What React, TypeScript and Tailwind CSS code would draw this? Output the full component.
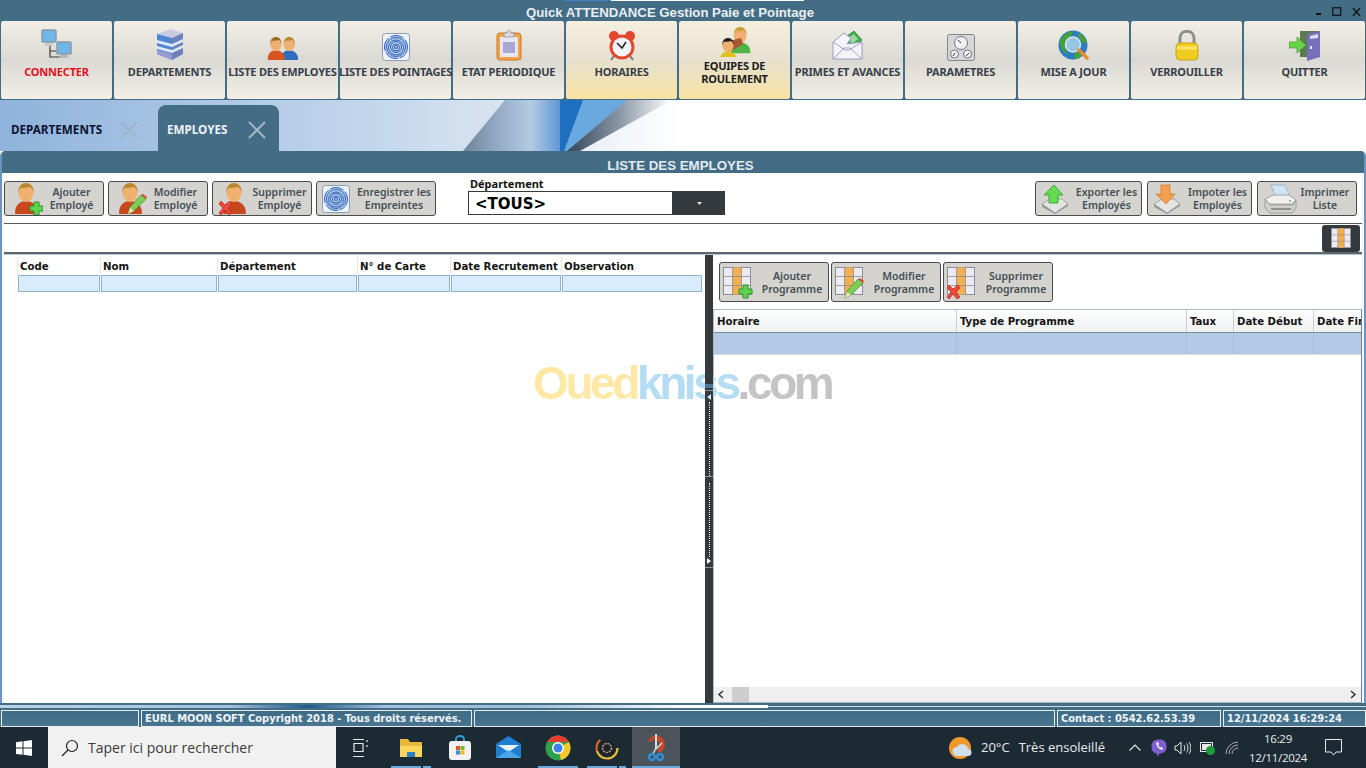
import React from "react"

const UI = "font-['Noto_Sans',sans-serif]"

// ---------- ICONS ----------
const Person = ({ x = 0, y = 0, shirt = "#d4521f", hair = "#b8862d" }: { x?: number; y?: number; shirt?: string; hair?: string }) => (
	<g transform={`translate(${x} ${y})`}>
		<path d="M1 30c0-8 5-12 11-12s12 4 12 12c0 1-1 1-2 1H3c-1 0-2 0-2-1z" fill={shirt} />
		<ellipse cx="12" cy="10" rx="7.5" ry="9" fill="#f0b070" />
		<path d="M4.500 10C4 3 8 0 12 0s8 3 7.500 10c-1-4-2-6-4-6-3 1-8 1-9 1-1 1-1.500 3-2 5z" fill={hair} />
	</g>
)

const Plus = ({ x, y }: { x: number; y: number }) => (
	<path transform={`translate(${x} ${y})`} d="M4 0h5v4h4v5H9v4H4V9H0V4h4z" fill="#5fd34d" stroke="#2f8f2a" />
)
const Cross = ({ x, y }: { x: number; y: number }) => (
	<path transform={`translate(${x} ${y})`} d="M2 0l4 4 5-4 2 3-4 4 4 5-3 2-4-5-4 5-2-2 4-5-4-4z" fill="#ea4a3a" stroke="#b3261e" strokeWidth=".7" />
)
const Pen = ({ x, y }: { x: number; y: number }) => (
	<g transform={`translate(${x} ${y})`}>
		<path d="M0 20l2-7L13 1l5 4L6 17z" fill="#7ccf52" stroke="#3f8a2e" strokeWidth=".7" />
		<path d="M13 1l2-1 4 3-1 2z" fill="#d8483a" />
		<path d="M0 20l2-6 4 3z" fill="#f3e0b8" />
	</g>
)

const Fingerprint = ({ size = 28 }: { size?: number }) => (
	<svg width={size} height={size} viewBox="0 0 28 28">
		<rect x=".5" y=".5" width="27" height="27" rx="3" fill="#eef2fa" stroke="#8b9cb8" />
		<circle cx="14" cy="14" r="11.500" fill="#b4cbee" />
		<g fill="none" stroke="#2f64b5" strokeWidth="1">
			<circle cx="14" cy="14" r="1.500" />
			<circle cx="14" cy="14.500" r="3.500" />
			<circle cx="14" cy="14" r="5.500" />
			<circle cx="14" cy="14.500" r="7.500" />
			<circle cx="14" cy="14" r="9.500" />
			<circle cx="14" cy="14" r="11.500" strokeDasharray="14 2" />
		</g>
	</svg>
)

const Network = () => (
	<svg width="32" height="32" viewBox="0 0 32 32">
		<path d="M9 17v11h12M9 22h6" fill="none" stroke="#3a3a3a" strokeWidth="1.200" />
		<rect x="1" y="1" width="14" height="12" rx="1" fill="#6fb6e8" stroke="#8d98a4" strokeWidth="1.500" />
		<path d="M5 14h6l2 3H3z" fill="#c3c9cf" />
		<rect x="16" y="13" width="14" height="12" rx="1" fill="#6fb6e8" stroke="#8d98a4" strokeWidth="1.500" />
		<path d="M20 26h6l2 3H18z" fill="#b4bac0" />
	</svg>
)
const Database = () => (
	<svg width="28" height="32" viewBox="0 0 28 32">
		<path d="M1 5L15 0l12 4-11 5z" fill="#c9cbe2" />
		<path d="M1 5l15 4v22L1 25z" fill="#4f86d2" />
		<path d="M16 9l11-5v21l-11 6z" fill="#6f7fb8" />
		<path d="M1 11l15 4 11-5v3l-11 5-15-4zM1 17l15 4 11-5v3l-11 5-15-4z" fill="#dbe8f8" />
		<path d="M1 21l15 4v6L1 25z" fill="#9a9ccf" />
	</svg>
)
const Users = () => (
	<svg width="32" height="24" viewBox="0 0 32 24">
		<g transform="scale(.74)">
			<Person x={18} y={0} shirt="#2d6cc0" hair="#b8862d" />
			<Person x={0} y={0} shirt="#d9551f" hair="#9a6a2c" />
		</g>
	</svg>
)
const Clipboard = () => (
	<svg width="26" height="32" viewBox="0 0 26 32">
		<rect x="1" y="4" width="24" height="27" rx="3" fill="#f2a24a" stroke="#c97a25" />
		<rect x="4" y="8" width="18" height="20" fill="#e8e6f2" />
		<rect x="7" y="13" width="12" height="11" fill="#aaa6d2" />
		<path d="M8 8V4h3c0-4 4-4 4 0h3v4z" fill="#d8d8de" stroke="#8d8d96" strokeWidth=".7" />
	</svg>
)
const Clock = () => (
	<svg width="28" height="30" viewBox="0 0 28 30">
		<circle cx="6" cy="5" r="5" fill="#e5462f" />
		<circle cx="22" cy="5" r="5" fill="#e5462f" />
		<path d="M6 25l-3 4M22 25l3 4" stroke="#777" strokeWidth="2" />
		<circle cx="14" cy="16" r="12.500" fill="#e5462f" />
		<circle cx="14" cy="16" r="9.500" fill="#f3f3f8" />
		<path d="M9 12l5 5 4-6" fill="none" stroke="#222" strokeWidth="1.500" />
	</svg>
)
const Team = () => (
	<svg width="32" height="30" viewBox="0 0 32 30">
		<g transform="translate(11 0) scale(.85)">
			<Person shirt="#4fb548" hair="#cfa03c" />
		</g>
		<path d="M10 14l12-3 2 6-10 6z" fill="#a9552f" />
		<g transform="translate(0 11) scale(.75)">
			<Person shirt="#e3c020" hair="#222" />
		</g>
	</svg>
)
const Envelope = () => (
	<svg width="31" height="31" viewBox="0 0 31 31">
		<path d="M11 9L22 1l8 9-9 8z" fill="#3fae4c" stroke="#21782e" strokeWidth=".7" />
		<path d="M16 8l6-4 4 5-6 5z" fill="#9ad89f" />
		<path d="M1 12L12 3l7 5-4 6 15-2v17H1z" fill="#f4f5fb" stroke="#9a9ac4" />
		<path d="M1 29l11-11h6l12 11M1 12l12 8 4 0 13-8" fill="none" stroke="#a0a0cc" />
	</svg>
)
const Gauges = () => (
	<svg width="28" height="27" viewBox="0 0 28 27">
		<rect x=".5" y=".5" width="27" height="26" rx="2" fill="#d6d6d8" stroke="#85858a" />
		<g fill="#eef0f4" stroke="#72767e">
			<circle cx="14" cy="9" r="6.500" />
			<circle cx="7.500" cy="20" r="4" />
			<circle cx="20.500" cy="20" r="4" />
		</g>
		<path d="M11 6l3 3M6 22l2-3M19 22l3-3" stroke="#333" />
	</svg>
)
const Globe = () => (
	<svg width="31" height="31" viewBox="0 0 31 31">
		<circle cx="15" cy="15" r="14.500" fill="#2a7cc4" />
		<path d="M2 10c4-6 8-8 12-9 2 3-2 5-3 8-1 4-4 3-4 7 0 3 2 5 3 8-5-1-9-7-8-14zM20 3c4 1 8 5 9 10-3 1-6-1-7-4-1-2-3-3-2-6zM18 22c3-1 6 0 7 2-2 3-5 5-8 5-1-3-1-5 1-7z" fill="#46a03c" />
		<circle cx="15" cy="14.500" r="7.500" fill="#bcdff0" fillOpacity=".75" stroke="#d8e6ee" strokeWidth="1.500" />
		<path d="M21 20l8 8" stroke="#e88a3c" strokeWidth="3.500" strokeLinecap="round" />
	</svg>
)
const Lock = () => (
	<svg width="24" height="31" viewBox="0 0 24 31">
		<path d="M5 14V8c0-9 14-9 14 0v6" fill="none" stroke="#8d8d8d" strokeWidth="3" />
		<rect x="1" y="13" width="22" height="17" rx="4" fill="#f0cc20" stroke="#c9a416" />
		<path d="M2 18h20" stroke="#fbe86a" strokeWidth="3" />
	</svg>
)
const Door = () => (
	<svg width="32" height="31" viewBox="0 0 32 31">
		<rect x="11" y="1" width="20" height="26" fill="#5e7b50" />
		<path d="M18 4l13-3v26l-13 4z" fill="#7471ba" />
		<path d="M21 6l8-2v4l-8 1z" fill="#d9dcf4" />
		<rect x="21" y="16" width="2" height="3" fill="#e5e5f5" />
		<path d="M0 12h8V7l9 8-9 8v-5H0z" fill="#67d44a" stroke="#3f9b2e" strokeWidth=".7" />
	</svg>
)
const Grid = ({ size = 28 }: { size?: number }) => (
	<svg width={size} height={size} viewBox="0 0 28 28">
		<rect x=".5" y=".5" width="27" height="27" fill="#eceaf4" stroke="#8c8c94" />
		<rect x="9.500" y=".5" width="9" height="27" fill="#f4b04e" />
		<path d="M9.500 0v28M18.500 0v28M0 9.500h28M0 18.500h28" stroke="#8c8c94" strokeWidth=".8" />
	</svg>
)
const Tray = ({ arrow, dark, light }: { arrow: string; dark: string; light: string }) => (
	<svg width="28" height="32" viewBox="0 0 28 32">
		<path d="M1 21l8-5h12l6 5-13 9z" fill="#e4e4e2" stroke="#8a8a8a" strokeWidth=".7" />
		<path d="M1 21v3l13 7 13-8v-2l-13 9z" fill="#9a9a98" />
		<path d={arrow} fill={light} stroke={dark} strokeWidth=".8" />
	</svg>
)
const Printer = () => (
	<svg width="34" height="32" viewBox="0 0 34 32">
		<path d="M8 2h14l5 12H13z" fill="#cfe4f6" stroke="#9aa8b4" strokeWidth=".7" />
		<path d="M2 16l8-4h16l7 5-4 4H6z" fill="#f0f0ee" stroke="#8a8a8a" strokeWidth=".7" />
		<path d="M2 16l5 6h23l3-5v8l-4 5H7l-5-5z" fill="#cfcfcd" stroke="#8a8a8a" strokeWidth=".7" />
		<path d="M8 26h20" stroke="#555" />
		<circle cx="27" cy="18" r="1" fill="#52c04a" />
	</svg>
)

const PersonIcon = ({ children }: { children?: React.ReactNode }) => (
	<svg width="33" height="33" viewBox="0 0 33 33">
		<Person x={4} y={1} shirt="#c9471c" />
		{children}
	</svg>
)
const GridIcon = ({ children }: { children?: React.ReactNode }) => (
	<svg width="30" height="33" viewBox="0 0 30 33">
		<g transform="translate(0 1)">
			<rect x=".5" y=".5" width="27" height="27" fill="#eceaf4" stroke="#8c8c94" />
			<rect x="9.500" y=".5" width="9" height="27" fill="#f4b04e" />
			<path d="M9.500 0v28M18.500 0v28M0 9.500h28M0 18.500h28" stroke="#8c8c94" strokeWidth=".8" />
		</g>
		{children}
	</svg>
)

// ---------- TOP BAR ----------
const topButtons = [
	{ label: "CONNECTER", icon: <Network />, red: true },
	{ label: "DEPARTEMENTS", icon: <Database /> },
	{ label: "LISTE DES EMPLOYES", icon: <Users /> },
	{ label: "LISTE DES POINTAGES", icon: <Fingerprint /> },
	{ label: "ETAT PERIODIQUE", icon: <Clipboard /> },
	{ label: "HORAIRES", icon: <Clock />, hot: true },
	{ label: "EQUIPES DE ROULEMENT", icon: <Team />, hot: true, two: true },
	{ label: "PRIMES ET AVANCES", icon: <Envelope /> },
	{ label: "PARAMETRES", icon: <Gauges /> },
	{ label: "MISE A JOUR", icon: <Globe /> },
	{ label: "VERROUILLER", icon: <Lock /> },
	{ label: "QUITTER", icon: <Door /> },
]

const TopButton = ({ label, icon, red, hot, two }: { label: string; icon: React.ReactNode; red?: boolean; hot?: boolean; two?: boolean }) => (
	<button
		className={`flex h-[79px] min-w-0 flex-1 flex-col items-center whitespace-nowrap rounded-[3px] border border-t-0 border-[#436c85] px-0 ${
			hot
				? "bg-[linear-gradient(#f5efdf,#e6e1d0_50%,#f9e2a2)]"
				: "bg-[linear-gradient(#f3efe6,#dbd9d3_50%,#f3efe6)]"
		} ${two ? "pt-[2px]" : "pt-[10px]"}`}
	>
		<div className={`flex items-end justify-center ${two ? "h-[34px]" : "h-[30px]"}`}>{icon}</div>
		<div
			className={`text-center text-[11px] font-bold tracking-[-0.2px] ${two ? "mt-[2px] w-[80px] whitespace-normal leading-[13px] text-[#1c1c1c]" : "mt-[4px] leading-[14px]"} ${
				red ? "text-[#e2101c]" : two ? "" : "text-[#37404a]"
			}`}
		>
			{label}
		</div>
	</button>
)

// ---------- ACTION BUTTONS ----------
const ActionButton = ({ width, icon, lines, tall, shift }: { width: string; icon: React.ReactNode; lines: string[]; tall?: boolean; shift?: boolean }) => (
	<button
		className={`flex shrink-0 items-center rounded-[3px] border border-[#4a4a4a] bg-[#d4d3cf] pr-[3px] ${tall ? "h-[40px] pl-[3px]" : "h-[35px] pl-[5px]"} ${width}`}
	>
		<span className="flex shrink-0 items-center justify-center">{icon}</span>
		<span className={`flex-1 text-center text-[10.500px] font-semibold leading-[13px] text-[#454e55] ${tall ? "mt-[2px]" : ""} ${shift ? "pl-[6px]" : ""}`}>
			{lines.map((l) => (
				<span key={l} className="block whitespace-nowrap">
					{l}
				</span>
			))}
		</span>
	</button>
)

const Cell = ({ className }: { className: string }) => (
	<div className={`h-[17px] shrink-0 border border-[#8fb4cf] bg-[#d9ecfd] ${className}`} />
)

const leftCols = [
	{ t: "Code", w: "w-[83px]" },
	{ t: "Nom", w: "w-[117px]" },
	{ t: "Département", w: "w-[140px]" },
	{ t: "N° de Carte", w: "w-[93px]" },
	{ t: "Date Recrutement", w: "w-[111px]" },
	{ t: "Observation", w: "w-[141px]" },
]

const rightCols = [
	{ t: "Horaire", w: "w-[243px]" },
	{ t: "Type de Programme", w: "w-[230px]" },
	{ t: "Taux", w: "w-[47px]" },
	{ t: "Date Début", w: "w-[80px]" },
	{ t: "Date Fin", w: "w-[60px]" },
]

const StatusCell = ({ className, children }: { className: string; children?: React.ReactNode }) => (
	<div className={`mt-px flex h-[17px] items-center whitespace-nowrap border border-[#e6eef3] bg-[linear-gradient(#3f6a84,#4a7590)] pl-[3px] pt-px font-['DejaVu_Sans_Condensed','DejaVu_Sans',sans-serif] text-[11px] font-bold text-[#eef4f8] ${className}`}>
		{children}
	</div>
)

export default function App() {
	return (
		<div className={`flex h-[768px] w-[1366px] flex-col overflow-hidden bg-white ${UI}`}>
			{/* title bar */}
			<div className="relative flex h-[21px] shrink-0 items-end justify-center bg-[#436c85] pr-[26px]">
				<span className="font-['Liberation_Sans',sans-serif] text-[13.2px] font-bold leading-[17px] text-[#e9eff3]">
					Quick ATTENDANCE Gestion Paie et Pointage
				</span>
				<div className="absolute left-[563px] top-0 h-px w-[48px] bg-[#3d7fc4]" />
				<div className="absolute left-[611px] top-0 h-px w-[193px] bg-white" />
				<div className="absolute right-[5px] top-[7px] flex items-center gap-[10px] text-[#111]">
					<svg width="7" height="8" viewBox="0 0 7 8"><rect x="1" y="5" width="5" height="2" fill="#111" /></svg>
					<svg width="10" height="9" viewBox="0 0 10 9"><rect x=".75" y=".75" width="8" height="7.500" fill="none" stroke="#111" strokeWidth="1.200" /></svg>
					<svg width="9" height="8" viewBox="0 0 9 8"><path d="M1 0l7 8M8 0L1 8" stroke="#111" strokeWidth="1.300" /></svg>
				</div>
			</div>

			{/* main toolbar */}
			<div className="flex h-[79px] shrink-0 bg-[#436c85]">
				{topButtons.map((b, i) => (
					<div key={b.label} className={i === 11 ? "flex w-[123px]" : "flex w-[113px]"}>
						<TopButton {...b} />
					</div>
				))}
			</div>

			{/* tabs */}
			<div className="relative flex h-[51px] shrink-0 items-end bg-[linear-gradient(90deg,#8fb3dc,#c9daee_30%,#dde6f1_38%,#ffffff_50%)]">
				<svg className="absolute left-[440px] top-0" width="250" height="51" viewBox="0 0 250 51">
					<defs>
						<linearGradient id="grey" x1="0" x2="1" y1="0" y2="0">
							<stop offset="0" stopColor="#6f8196" />
							<stop offset=".3" stopColor="#8ea5bf" />
							<stop offset=".7" stopColor="#b4cbe4" />
							<stop offset="1" stopColor="#5f97d6" />
						</linearGradient>
						<linearGradient id="shade" x1="0" x2="1" y1="0" y2="0">
							<stop offset="0" stopColor="#33465c" />
							<stop offset=".5" stopColor="#8a97a6" />
							<stop offset="1" stopColor="#ffffff" />
						</linearGradient>
					</defs>
					<path d="M23 51L65 0h55v51z" fill="url(#grey)" />
					<path d="M120 0h67l-60 51h-7z" fill="#1e6fc0" />
					<path d="M143 0h44l-60 51h-3z" fill="#6aa8e0" />
					<path d="M187 0h45l-92 51h-13z" fill="url(#shade)" />
				</svg>
				<div className="relative flex h-[46px] w-[158px] items-center pl-[11px] pt-[4px]">
					<span className="text-[11.700px] font-bold text-[#0c1330]">DEPARTEMENTS</span>
					<svg className="ml-[18px]" width="18" height="18" viewBox="0 0 18 18"><path d="M1 1l16 16M17 1L1 17" stroke="#9fb4cc" strokeWidth="2" /></svg>
				</div>
				<div className="relative flex h-[46px] w-[121px] items-center rounded-t-[8px] bg-[#436c85] pl-[9px] pt-[4px]">
					<span className="text-[11.700px] font-bold text-[#eef3f6]">EMPLOYES</span>
					<svg className="ml-[20px]" width="18" height="18" viewBox="0 0 18 18"><path d="M1 1l16 16M17 1L1 17" stroke="#a4b6c2" strokeWidth="2" /></svg>
				</div>
			</div>

			{/* panel */}
			<div className="flex min-h-0 flex-1 flex-col rounded-t-[5px] border-x-[2px] border-x-[#6a93bd] bg-[#436c85]">
				<div className="h-[22px] shrink-0 pr-[5px] text-center font-['Liberation_Sans',sans-serif] text-[13.300px] font-bold leading-[30px] text-[#e3ebf0]">
					LISTE DES EMPLOYES
				</div>
				<div className="flex min-h-0 flex-1 flex-col border-x-[2px] border-x-[#f4f6f8] bg-white">
					{/* actions row */}
					<div className="flex h-[51px] shrink-0 items-start border-b border-[#555c60] pt-[8px]">
						<div className="flex gap-[4px]">
							<ActionButton width="w-[100px]" lines={["Ajouter", "Employé"]} icon={<PersonIcon><Plus x={20} y={20} /></PersonIcon>} />
							<ActionButton width="w-[100px]" lines={["Modifier", "Employé"]} icon={<PersonIcon><Pen x={14} y={12} /></PersonIcon>} />
							<ActionButton width="w-[100px]" lines={["Supprimer", "Employé"]} icon={<PersonIcon><Cross x={1} y={19} /></PersonIcon>} />
							<ActionButton shift width="w-[120px]" lines={["Enregistrer les", "Empreintes"]} icon={<Fingerprint />} />
						</div>
						<div className="ml-[32px] mt-[-4px] w-[257px]">
							<div className="pl-[2px] text-[11px] font-bold leading-[14px] text-[#111]">Département</div>
							<div className="flex h-[24px]">
								<div className="flex-1 border border-[#333a3f] pl-[6px] font-['DejaVu_Sans',sans-serif] text-[15px] font-bold leading-[24px] text-black">&lt;TOUS&gt;</div>
								<div className="flex w-[52px] items-center justify-center bg-[#33393d]">
									<svg width="5" height="3" viewBox="0 0 5 3"><path d="M0 0h5L2.500 3z" fill="#e4e4e4" /></svg>
								</div>
							</div>
						</div>
						<div className="ml-auto flex gap-[5px] pr-[5px]">
							<ActionButton shift width="w-[107px]" lines={["Exporter les", "Employés"]} icon={<Tray arrow="M8 12h-5L13 2l9 10h-5v8H8z" dark="#2f9b2c" light="#63dc52" />} />
							<ActionButton shift width="w-[105px]" lines={["Impoter les", "Employés"]} icon={<Tray arrow="M8 2h9v9h5l-9 10L3 11h5z" dark="#d07a28" light="#f5a050" />} />
							<ActionButton width="w-[100px]" lines={["Imprimer", "Liste"]} icon={<Printer />} />
						</div>
					</div>

					{/* second strip */}
					<div className="flex h-[30px] shrink-0 items-center justify-end border-b-[2px] border-[#5d686e]">
						<div className="mr-[2px] flex h-[27px] w-[38px] items-center justify-center rounded-[3px] bg-[#33393d]">
							<Grid size={20} />
						</div>
					</div>

					{/* split */}
					<div className="flex min-h-0 flex-1 border-t border-[#b9c6cf]">
						{/* left */}
						<div className="w-[701px] shrink-0 pl-[13px] pt-[2px]">
							<div className="flex">
								{leftCols.map((c) => (
									<div key={c.t} className={`h-[18px] shrink-0 whitespace-nowrap border-l border-[#e1e6ea] pl-[2px] font-['DejaVu_Sans_Condensed','DejaVu_Sans',sans-serif] text-[11.300px] font-bold leading-[20px] text-[#141414] ${c.w}`}>
										{c.t}
									</div>
								))}
							</div>
							<div className="ml-px flex gap-px">
								<Cell className="w-[82px]" />
								<Cell className="w-[116px]" />
								<Cell className="w-[139px]" />
								<Cell className="w-[92px]" />
								<Cell className="w-[110px]" />
								<Cell className="w-[140px]" />
							</div>
						</div>

						{/* splitter */}
						<div className="z-10 flex w-[8px] shrink-0 flex-col items-center bg-[#33393d]">
							<div className="mt-[129px] h-[4px] w-full bg-[#4d7a96]" />
							<div className="mt-[2px] flex h-[178px] w-full flex-col items-center border-y border-[#8d9499] py-[3px]">
								<svg className="shrink-0" width="4" height="6" viewBox="0 0 4 6"><path d="M4 0v6L0 3z" fill="#cfe6f5" /></svg>
								<div className="mt-[2px] h-[76px] w-px border-l border-dotted border-white" />
								<div className="h-px w-full bg-[#8d9499]" />
								<div className="mt-[6px] h-[76px] w-px border-l border-dotted border-white" />
								<svg className="mt-[1px] shrink-0" width="4" height="6" viewBox="0 0 4 6"><path d="M0 0v6l4-3z" fill="#fff" /></svg>
							</div>
						</div>

						{/* right */}
						<div className="flex min-w-0 flex-1 flex-col">
							<div className="flex h-[54px] shrink-0 gap-[2px] pl-[6px] pt-[7px]">
								<ActionButton tall shift width="w-[110px]" lines={["Ajouter", "Programme"]} icon={<GridIcon><Plus x={16} y={19} /></GridIcon>} />
								<ActionButton tall shift width="w-[110px]" lines={["Modifier", "Programme"]} icon={<GridIcon><Pen x={10} y={12} /></GridIcon>} />
								<ActionButton tall shift width="w-[110px]" lines={["Supprimer", "Programme"]} icon={<GridIcon><Cross x={0} y={19} /></GridIcon>} />
							</div>
							<div className="flex min-h-0 flex-1 flex-col overflow-hidden border border-[#a9bac7] border-r-[#6e8496]">
								<div className="flex h-[23px] shrink-0 overflow-hidden border-b border-[#7f8f9a] bg-[linear-gradient(#ffffff,#eef0f2)]">
									{rightCols.map((c) => (
										<div key={c.t} className={`shrink-0 whitespace-nowrap border-r border-[#c8ced3] pl-[3px] font-['DejaVu_Sans_Condensed','DejaVu_Sans',sans-serif] text-[11.300px] font-bold leading-[23px] text-[#141414] ${c.w}`}>
											{c.t}
										</div>
									))}
								</div>
								<div className="flex h-[22px] shrink-0 border-b border-[#d6dde3] bg-[#b3c9e6]">
									{rightCols.map((c) => (
										<div key={c.t} className={`shrink-0 border-r border-[#a8bdd8] ${c.w}`} />
									))}
								</div>
								<div className="flex-1" />
								<div className="flex h-[15px] shrink-0 items-center bg-[#efefef] pl-[3px] pr-[4px]">
									<svg width="7" height="9" viewBox="0 0 7 9"><path d="M6 1L2 4.500 6 8" fill="none" stroke="#333" strokeWidth="1.500" /></svg>
									<div className="ml-[8px] h-full w-[17px] bg-[#cdcdcd]" />
									<svg className="ml-auto" width="7" height="9" viewBox="0 0 7 9"><path d="M1 1l4 3.500L1 8" fill="none" stroke="#333" strokeWidth="1.500" /></svg>
								</div>
							</div>
						</div>
					</div>
				</div>
			</div>

			{/* strip below panel */}
			<div className="flex h-[6px] shrink-0 items-center bg-[#436c85]">
				<div className="h-[3px] w-[768px] bg-[linear-gradient(90deg,#bcd2e8,#a3c0de_30%,#1f5b8c_40%,#a3c0de_50%,#9fbcd8_68%,#ffffff_90%)]" />
				<div className="h-[1px] flex-1 bg-[#cfdde6]" />
			</div>

			{/* status bar */}
			<div className="flex h-[18px] shrink-0 items-start gap-[2px] bg-[#436c85]">
				<StatusCell className="ml-px w-[138px]" />
				<StatusCell className="w-[331px]">EURL MOON SOFT Copyright 2018 - Tous droits réservés.</StatusCell>
				<StatusCell className="w-[581px]" />
				<StatusCell className="w-[164px]">Contact : 0542.62.53.39</StatusCell>
				<StatusCell className="flex-1">12/11/2024 16:29:24</StatusCell>
			</div>

			{/* windows taskbar */}
			<div className="flex h-[41px] shrink-0 items-center bg-[#1c2a33] text-[#e8ecef]">
				<div className="flex w-[48px] shrink-0 justify-center">
					<svg width="16" height="16" viewBox="0 0 16 16"><path d="M0 2.200l6.500-.9v6.300H0zM7.500 1.200L16 0v7.600H7.500zM0 8.500h6.500v6.300L0 13.900zM7.500 8.500H16V16l-8.500-1.200z" fill="#fff" /></svg>
				</div>
				<div className="flex h-[41px] w-[288px] shrink-0 items-center bg-[#f1f1f1] pl-[13px] font-['Open_Sans',sans-serif] text-[14px] text-[#3a3a3a]">
					<svg width="18" height="18" viewBox="0 0 18 18"><circle cx="11" cy="7" r="5.500" fill="none" stroke="#222" strokeWidth="1.200" /><path d="M7 11l-6 6" stroke="#222" strokeWidth="1.200" /></svg>
					<span className="ml-[9px]">Taper ici pour rechercher</span>
				</div>
				<div className="ml-[15px] flex w-[20px] shrink-0 justify-center">
					<svg width="16" height="18" viewBox="0 0 16 18"><path d="M0 .500h11M0 17.500h11M1 4.500h9v8H1zM14 1v2M14 6v2" fill="none" stroke="#e8e8e8" strokeWidth="1.200" /></svg>
				</div>
				<div className="relative ml-[15px] flex h-[41px] w-[49px] shrink-0 items-center justify-center">
					<svg width="24" height="22" viewBox="0 0 24 22"><path d="M1 2h8l2 3h12v15H1z" fill="#e8b93a" /><path d="M1 9h22v11H1z" fill="#f9d65c" /><path d="M8 20v-5h8v5z" fill="#2f7fc4" /></svg>
					<div className="absolute bottom-0 left-[5px] h-[2px] w-[30px] bg-[#6aa9dc]" />
					<div className="absolute bottom-0 left-[37px] h-[2px] w-[8px] bg-[#6aa9dc]" />
				</div>
				<div className="flex h-[41px] w-[49px] shrink-0 items-center justify-center">
					<svg width="24" height="26" viewBox="0 0 24 26"><path d="M8 7V4c0-4 8-4 8 0v3" fill="none" stroke="#2f9fd8" strokeWidth="1.800" /><rect x="1" y="6" width="22" height="19" rx="3" fill="#f2f2f2" /><rect x="8" y="11" width="4" height="4" fill="#e8502f" /><rect x="12.500" y="11" width="4" height="4" fill="#7ab82e" /><rect x="8" y="15.500" width="4" height="4" fill="#2f8fd8" /><rect x="12.500" y="15.500" width="4" height="4" fill="#f2b81e" /></svg>
				</div>
				<div className="flex h-[41px] w-[49px] shrink-0 items-center justify-center">
					<svg width="25" height="24" viewBox="0 0 25 24"><path d="M12.500 0L25 8v14H0V8z" fill="#1f7ed0" /><path d="M2 9h21l-10.500 7z" fill="#e8f2fa" /><path d="M0 22l12.500-8L25 22z" fill="#4aa5e8" /></svg>
				</div>
				<div className="relative flex h-[41px] w-[49px] shrink-0 items-center justify-center">
					<svg width="26" height="26" viewBox="0 0 26 26">
						<circle cx="13" cy="13" r="12.500" fill="#2ea24a" />
						<path d="M13 .500A12.500 12.500 0 0 1 24 7H13z" fill="#e53c2e" />
						<path d="M2 7a12.500 12.500 0 0 1 11-6.500V7z" fill="#e53c2e" />
						<path d="M24 7a12.500 12.500 0 0 1-8 18l-3-12z" fill="#f6c82c" />
						<circle cx="13" cy="13" r="6" fill="#fff" />
						<circle cx="13" cy="13" r="4.500" fill="#3d82e4" />
					</svg>
					<div className="absolute bottom-0 left-[5px] h-[2px] w-[40px] bg-[#6aa9dc]" />
				</div>
				<div className="relative flex h-[41px] w-[49px] shrink-0 items-center justify-center">
					<svg width="24" height="26" viewBox="0 0 24 26">
						<circle cx="12" cy="13" r="10.500" fill="none" stroke="#e8c23a" strokeWidth="2.200" strokeDasharray="30 36" />
						<circle cx="12" cy="13" r="10.500" fill="none" stroke="#d8642c" strokeWidth="2.200" strokeDasharray="12 54" strokeDashoffset="-30" />
						<circle cx="12" cy="13" r="7.500" fill="#222" />
						<circle cx="12" cy="13" r="4.500" fill="none" stroke="#aaa" strokeWidth="1.500" strokeDasharray="2 1" />
					</svg>
					<div className="absolute bottom-0 left-[5px] h-[2px] w-[30px] bg-[#6aa9dc]" />
					<div className="absolute bottom-0 left-[37px] h-[2px] w-[7px] bg-[#6aa9dc]" />
				</div>
				<div className="relative ml-px flex h-[41px] w-[48px] shrink-0 items-center justify-center bg-[#4a5459]">
					<svg width="24" height="28" viewBox="0 0 24 28">
						<path d="M9 2a9 9 0 0 1 6 17l-2-3a6 6 0 0 0-4-11z" fill="#c8452a" />
						<path d="M4 8a9 9 0 0 1 5-6v5z" fill="#c8452a" />
						<path d="M11 0h2v15h-2z" fill="#dcdcdc" />
						<path d="M12 14l-3 6M12 15l6-6" stroke="#dcdcdc" strokeWidth="1.500" />
						<circle cx="8" cy="23" r="3" fill="none" stroke="#2f8fd8" strokeWidth="2.400" />
						<circle cx="16" cy="23" r="3" fill="none" stroke="#2f8fd8" strokeWidth="2.400" />
					</svg>
					<div className="absolute bottom-0 left-0 h-[2px] w-full bg-[#6aa9dc]" />
				</div>

				{/* tray */}
				<div className="ml-[269px] flex shrink-0 items-center">
					<svg width="24" height="24" viewBox="0 0 24 24"><circle cx="11" cy="12" r="11" fill="#f09a2e" /><path d="M8 20a4.500 4.500 0 0 1 0-9 6 6 0 0 1 11 2 3.500 3.500 0 0 1 0 7z" fill="#cfdfee" /></svg>
					<span className="ml-[8px] font-['Open_Sans',sans-serif] text-[13px]">20°C</span>
					<span className="ml-[9px] whitespace-nowrap font-['Open_Sans',sans-serif] text-[13px]">Très ensoleillé</span>
				</div>
				<svg className="ml-[24px] shrink-0" width="12" height="7" viewBox="0 0 12 7"><path d="M.500 6.500l5.500-5.500 5.500 5.500" fill="none" stroke="#e8e8e8" strokeWidth="1.200" /></svg>
				<svg className="ml-[10px] shrink-0" width="16" height="18" viewBox="0 0 16 18"><path d="M8 .500c5 0 7.500 2.500 7.500 7 0 5-3 7-6.500 7l-3 3v-3C2 14 .500 11.500 .500 7.500c0-4.500 2.500-7 7.500-7z" fill="#7f5fd0" /><path d="M5 4c1 4 3 6 6 7l1-2-2-1-1 1-2-3 1-1-1-2z" fill="#fff" /></svg>
				<svg className="ml-[7px] shrink-0" width="17" height="14" viewBox="0 0 17 14"><path d="M1 5h2l4-4v12L3 9H1zM10 4c1 2 1 4 0 6M12.500 2.500c2 3 2 6 0 9M15 1c2.500 4 2.500 8 0 12" fill="none" stroke="#e8e8e8" /></svg>
				<svg className="ml-[9px] shrink-0" width="15" height="14" viewBox="0 0 15 14"><rect x=".5" y="1.500" width="12" height="9" fill="none" stroke="#e8e8e8" /><rect x="2" y="3" width="9" height="6" fill="#e8e8e8" /><circle cx="10.500" cy="9.500" r="4.500" fill="#1d9b3f" /></svg>
				<svg className="ml-[10px] shrink-0" width="14" height="14" viewBox="0 0 14 14"><path d="M1 13a12 12 0 0 1 12-12M4 13a9 9 0 0 1 9-9M7 13a6 6 0 0 1 6-6" fill="none" stroke="#a8b0b5" /></svg>
				<div className="ml-[9px] w-[60px] shrink-0 text-center font-['Open_Sans',sans-serif] text-[11.500px] leading-[19px] tracking-[-0.3px]">
					<div>16:29</div>
					<div>12/11/2024</div>
				</div>
				<svg className="ml-[17px] shrink-0" width="17" height="17" viewBox="0 0 17 17"><path d="M.500 .500h16v12.500H11l-2.500 3-2.500-3H.500z" fill="none" stroke="#e8e8e8" /></svg>
			</div>

			{/* watermark */}
			<div className="pointer-events-none absolute left-[533px] top-[358px] whitespace-nowrap font-['Liberation_Sans',sans-serif] text-[46px] font-bold leading-[50px] tracking-[-3.400px] blur-[0.4px]">
				<span className="text-[#fde8a6]">Oued</span>
				<span className="text-[#b4dcf3]">kniss</span>
				<span className="text-[#c4c4c4]">.com</span>
			</div>
		</div>
	)
}
